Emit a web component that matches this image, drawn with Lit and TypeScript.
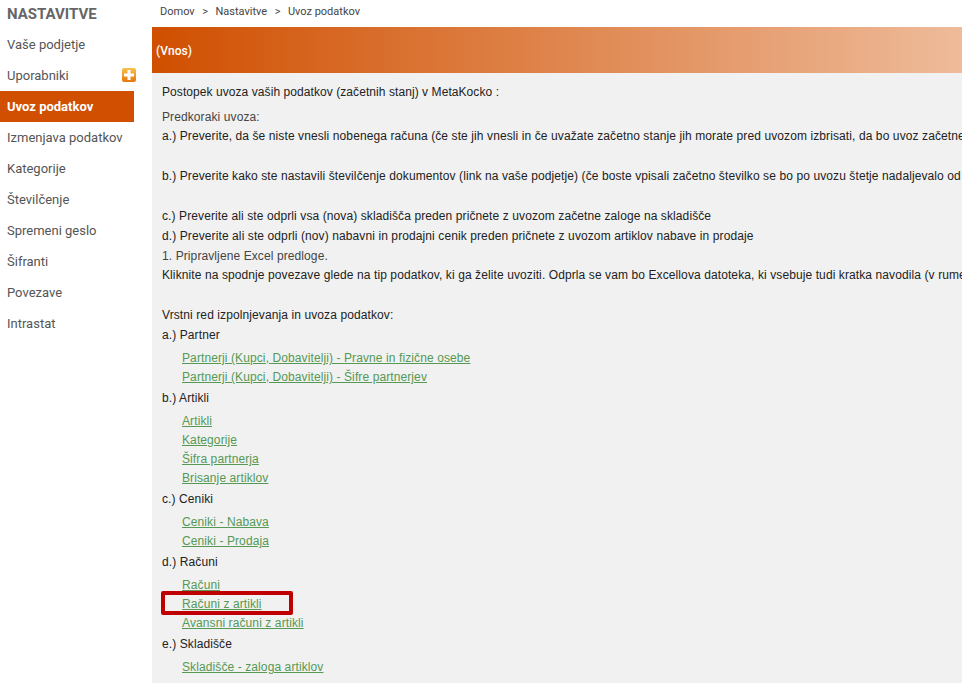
import {html, css, LitElement} from 'lit';
import {customElement} from 'lit/decorators.js';

const menu = ['Vaše podjetje', 'Uporabniki', 'Uvoz podatkov', 'Izmenjava podatkov', 'Kategorije', 'Številčenje', 'Spremeni geslo', 'Šifranti', 'Povezave', 'Intrastat'];

const groups = [
  {title: 'a.) Partner', links: ['Partnerji (Kupci, Dobavitelji) - Pravne in fizične osebe', 'Partnerji (Kupci, Dobavitelji) - Šifre partnerjev']},
  {title: 'b.) Artikli', links: ['Artikli', 'Kategorije', 'Šifra partnerja', 'Brisanje artiklov']},
  {title: 'c.) Ceniki', links: ['Ceniki - Nabava', 'Ceniki - Prodaja']},
  {title: 'd.) Računi', links: ['Računi', 'Računi z artikli', 'Avansni računi z artikli']},
  {title: 'e.) Skladišče', links: ['Skladišče - zaloga artiklov']},
];

@customElement('app-root')
export class AppRoot extends LitElement {
  static styles = css`
    :host {
      display: flex;
      width: 962px;
      height: 683px;
      overflow: hidden;
      position: relative;
      background: #ffffff;
      font-family: "Liberation Sans", Arial, sans-serif;
      font-size: 12px;
      color: #222222;
    }

    .sidebar {
      width: 152px;
      flex: none;
      font-family: Roboto, sans-serif;
    }

    .sidebar h2 {
      margin: 0;
      padding: 5px 0 0 7px;
      height: 24px;
      font-size: 15px;
      line-height: 18px;
      font-weight: bold;
      color: #666666;
    }

    .menu {
      width: 134px;
      position: relative;
    }

    .menu-item {
      height: 31px;
      padding-left: 7px;
      line-height: 31px;
      font-size: 13px;
      color: #555555;
    }

    .menu-item.active {
      background: #d04f00;
      color: #ffffff;
      font-weight: bold;
    }

    .plus {
      position: absolute;
      left: 122px;
      top: 39px;
    }

    .main {
      flex: 1;
      min-width: 0;
    }

    .crumbs {
      height: 27px;
      display: flex;
      gap: 7.500px;
      padding: 4px 0 0 8px;
      box-sizing: border-box;
      font-family: Roboto, sans-serif;
      font-size: 11px;
      line-height: 15px;
      color: #444444;
    }

    .band {
      height: 45px;
      padding: 1px 0 0 4px;
      line-height: 46px;
      background: linear-gradient(to right, #d04f00, #eebb9a);
      color: #ffffff;
      font-family: Roboto, sans-serif;
      font-weight: 500;
      font-size: 12px;
    }

    .body {
      height: 601px;
      background: #f1f1f1;
      padding: 9px 0 0 10px;
      white-space: nowrap;
      overflow: hidden;
      letter-spacing: 0.1px;
    }

    .line {
      height: 20px;
      line-height: 20px;
    }

    .line.intro {
      height: 25px;
      letter-spacing: 0.07px;
    }

    .line.muted {
      height: 19px;
      color: #444444;
    }

    .gap {
      height: 20px;
    }

    .links {
      padding: 4px 0 1px 20px;
    }

    .links a {
      display: block;
      height: 19px;
      line-height: 19px;
      color: #559955;
      text-decoration: underline;
    }

    .marker {
      position: absolute;
      left: 161px;
      top: 591px;
      width: 132px;
      height: 24px;
      box-sizing: border-box;
      border: 4px solid #c00000;
      border-radius: 2px;
    }
  `;

  render() {
    return html`
      <div class="sidebar">
        <h2>NASTAVITVE</h2>
        <div class="menu">
          ${menu.map(m => html`<div class="menu-item ${m === 'Uvoz podatkov' ? 'active' : ''}">${m}</div>`)}
          <svg class="plus" width="14" height="14" viewBox="0 0 14 14">
            <defs>
              <linearGradient id="pl" x1="0" y1="0" x2="0" y2="1">
                <stop offset="0" stop-color="#f9c24c"/>
                <stop offset="1" stop-color="#e8760c"/>
              </linearGradient>
            </defs>
            <rect x="0" y="0" width="14" height="14" rx="2" fill="url(#pl)"/>
            <path d="M5.5 2h3v3.5H12v3H8.500v3.500h-3V8.500H2v-3h3.500z" fill="#ffffff"/>
          </svg>
        </div>
      </div>
      <div class="main">
        <div class="crumbs">
          <span>Domov</span><span>&gt;</span><span>Nastavitve</span><span>&gt;</span><span>Uvoz podatkov</span>
        </div>
        <div class="band">(Vnos)</div>
        <div class="body">
          <div class="line intro">Postopek uvoza vaših podatkov (začetnih stanj) v MetaKocko :</div>
          <div class="line muted">Predkoraki uvoza:</div>
          <div class="line">a.) Preverite, da še niste vnesli nobenega računa (če ste jih vnesli in če uvažate začetno stanje jih morate pred uvozom izbrisati, da bo uvoz začetne</div>
          <div class="gap"></div>
          <div class="line">b.) Preverite kako ste nastavili številčenje dokumentov (link na vaše podjetje) (če boste vpisali začetno številko se bo po uvozu štetje nadaljevalo od</div>
          <div class="gap"></div>
          <div class="line">c.) Preverite ali ste odprli vsa (nova) skladišča preden pričnete z uvozom začetne zaloge na skladišče</div>
          <div class="line">d.) Preverite ali ste odprli (nov) nabavni in prodajni cenik preden pričnete z uvozom artiklov nabave in prodaje</div>
          <div class="line muted">1. Pripravljene Excel predloge.</div>
          <div class="line">Kliknite na spodnje povezave glede na tip podatkov, ki ga želite uvoziti. Odprla se vam bo Excellova datoteka, ki vsebuje tudi kratka navodila (v rume</div>
          <div class="gap"></div>
          <div class="line">Vrstni red izpolnjevanja in uvoza podatkov:</div>
          ${groups.map(g => html`
            <div class="line">${g.title}</div>
            <div class="links">${g.links.map(l => html`<a>${l}</a>`)}</div>
          `)}
        </div>
      </div>
      <div class="marker"></div>
    `;
  }
}
